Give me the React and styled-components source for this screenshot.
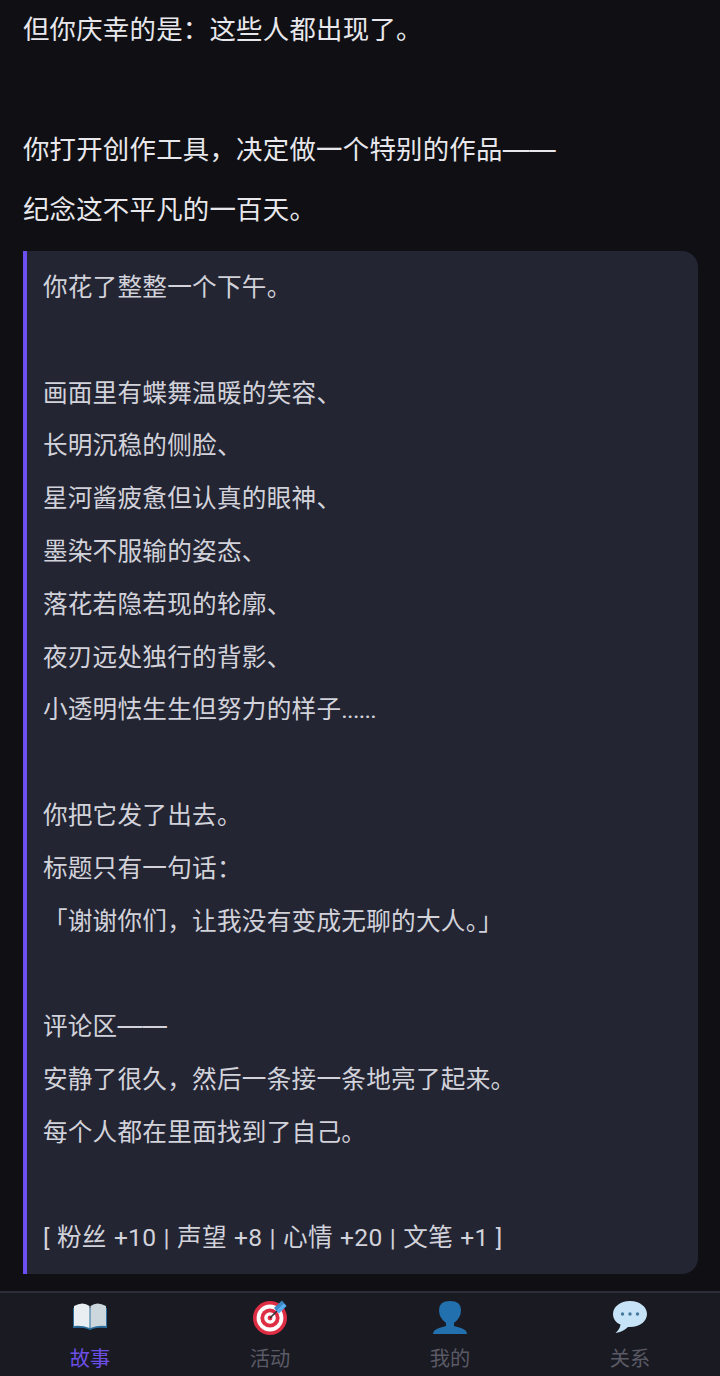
import React from "react"
import styled, { createGlobalStyle } from "styled-components"

const GlobalStyle = createGlobalStyle`
  html, body {
    margin: 0;
    padding: 0;
    background: #0f0f14;
  }
  * {
    box-sizing: border-box;
  }
`

const Page = styled.div`
  display: flex;
  flex-direction: column;
  height: 1376px;
  overflow: hidden;
  font-family: Roboto, "Noto Sans CJK SC", sans-serif;
  background: #0f0f14;
`

const Story = styled.main`
  flex: 1;
  min-height: 0;
  padding: 0 21.6px 0 22.88px;
`

const Para = styled.p`
  margin: 0;
  min-height: 60px;
  font-size: 26.4px;
  line-height: 60px;
  letter-spacing: 0.264px;
  color: #e8e8ec;
  white-space: pre;
`

const Quote = styled.section`
  margin-top: 11px;
  padding: 11px 16px 9px;
  border-left: 4.4px solid #6c4ff0;
  border-radius: 0 16px 16px 0;
  background: #232533;
`

const QuoteLine = styled.p`
  margin: 0;
  min-height: 52.8px;
  font-size: 24.64px;
  line-height: 52.8px;
  letter-spacing: 0.246px;
  word-spacing: 0.9px;
  color: #d2d2da;
  white-space: pre;
`

/* Roboto's long dash is short and leaves a gap, Inter's joins up */
const Dash = styled.span`
  font-family: Inter, sans-serif;
  line-height: 0;
  letter-spacing: 0.2px;
`

const Dots = styled.span`
  letter-spacing: -0.7px;
`

const TabBar = styled.nav`
  display: grid;
  grid-template-columns: repeat(4, 1fr);
  flex: none;
  height: 85px;
  border-top: 2px solid #2d2c38;
  background: #1a1a22;
`

const Tab = styled.div`
  display: flex;
  flex-direction: column;
  align-items: center;
  padding-top: 6px;
  color: ${(p) => (p.$active ? "#6c4fe6" : "#5a5a66")};
`

const TabIcon = styled.svg`
  width: 36px;
  height: 36px;
  display: block;
`

const TabLabel = styled.span`
  margin-top: 10px;
  font-size: 20.24px;
  line-height: 28px;
`

const BookIcon = () => (
  <TabIcon viewBox="0 0 36 36">
    <path d="M1 9 L1 29 Q10 28 16 30 Q18 32 20 30 Q26 28 35 29 L35 9 Z" fill="#2c6e9e" />
    <path d="M2 7 Q11 2 17.5 7 L17.5 29 Q10 26 2 27 Z" fill="#e8eef2" />
    <path d="M34 7 Q25 2 18.5 7 L18.5 29 Q26 26 34 27 Z" fill="#ccd6dd" />
  </TabIcon>
)

const TargetIcon = () => (
  <TabIcon viewBox="0 0 36 36">
    <circle cx="18" cy="19" r="17" fill="#dd2e44" />
    <circle cx="18" cy="19" r="13.4" fill="#fff" />
    <circle cx="18" cy="19" r="9.6" fill="#dd2e44" />
    <circle cx="18" cy="19" r="5.8" fill="#fff" />
    <circle cx="18" cy="19" r="2.4" fill="#dd2e44" />
    <path d="M18 19 L28 9" stroke="#31373d" strokeWidth="1.6" />
    <path d="M22 9 L30 1.5 L32 4 L25 12.5 Z" fill="#3b88c3" />
    <path d="M27 14.5 L34.5 7 L32 4 L24.5 11.5 Z" fill="#55acee" />
  </TabIcon>
)

const PersonIcon = () => (
  <TabIcon viewBox="0 0 36 36">
    <path d="M1 35 Q1 31 7 29 L14 27 L14 24 Q7 19 7 11 Q7 2 18 2 Q29 2 29 11 Q29 19 22 24 L22 27 L29 29 Q35 31 35 35 Z" fill="#2270ad" />
  </TabIcon>
)

const ChatIcon = () => (
  <TabIcon viewBox="0 0 36 36">
    <path d="M18 2 C8 2 1 8 1 15 C1 20 4 24 8.5 25.5 Q8 30 3.5 34 Q11 33 16 28 L18 28 C28 28 35 22 35 15 C35 8 28 2 18 2 Z" fill="#c6e3f7" />
    <circle cx="10.5" cy="15" r="1.7" fill="#44799c" />
    <circle cx="18" cy="15" r="1.7" fill="#44799c" />
    <circle cx="25.5" cy="15" r="1.7" fill="#44799c" />
  </TabIcon>
)

const intro = [
  "但你庆幸的是：这些人都出现了。",
  "",
  <>你打开创作工具，决定做一个特别的作品<Dash>——</Dash></>,
  "纪念这不平凡的一百天。",
]

const quote = [
  "你花了整整一个下午。",
  "",
  "画面里有蝶舞温暖的笑容、",
  "长明沉稳的侧脸、",
  "星河酱疲惫但认真的眼神、",
  "墨染不服输的姿态、",
  "落花若隐若现的轮廓、",
  "夜刃远处独行的背影、",
  <>小透明怯生生但努力的样子<Dots>......</Dots></>,
  "",
  "你把它发了出去。",
  "标题只有一句话：",
  "「谢谢你们，让我没有变成无聊的大人。」",
  "",
  <>评论区<Dash>——</Dash></>,
  "安静了很久，然后一条接一条地亮了起来。",
  "每个人都在里面找到了自己。",
  "",
  "[ 粉丝 +10 | 声望 +8 | 心情 +20 | 文笔 +1 ]",
]

const tabs = [
  { label: "故事", Icon: BookIcon, active: true },
  { label: "活动", Icon: TargetIcon },
  { label: "我的", Icon: PersonIcon },
  { label: "关系", Icon: ChatIcon },
]

export default function App() {
  return (
    <Page>
      <GlobalStyle />
      <Story>
        {intro.map((line, i) => (
          <Para key={i}>{line}</Para>
        ))}
        <Quote>
          {quote.map((line, i) => (
            <QuoteLine key={i}>{line}</QuoteLine>
          ))}
        </Quote>
      </Story>
      <TabBar>
        {tabs.map(({ label, Icon, active }) => (
          <Tab key={label} $active={active}>
            <Icon />
            <TabLabel>{label}</TabLabel>
          </Tab>
        ))}
      </TabBar>
    </Page>
  )
}
